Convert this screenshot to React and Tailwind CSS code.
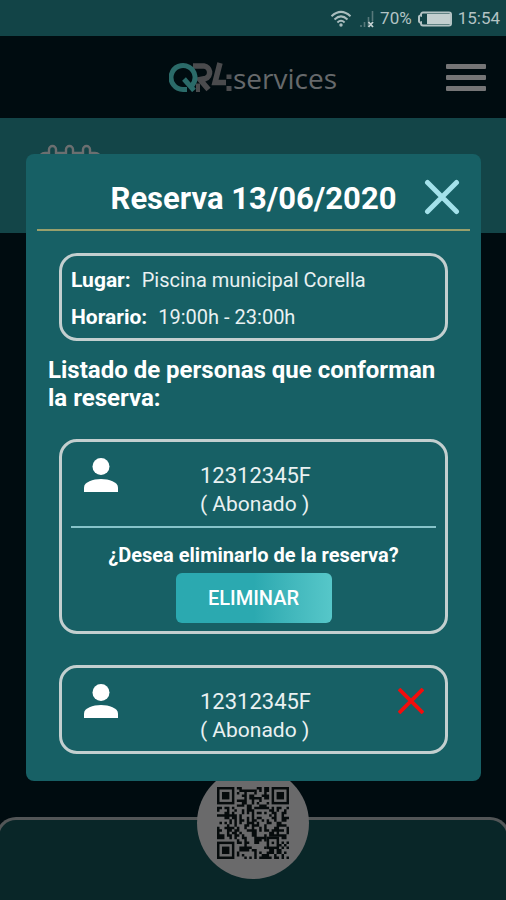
import React from "react";

const QR_SIZE = 29;

function inFinder(x, y) {
  return (x < 8 && y < 8) || (x > 20 && y < 8) || (x < 8 && y > 20);
}

function inAlignment(x, y) {
  return x >= 20 && x <= 24 && y >= 20 && y <= 24;
}

function qrPath() {
  let seed = 20200613;
  let d = "";
  for (let y = 0; y < QR_SIZE; y++) {
    for (let x = 0; x < QR_SIZE; x++) {
      seed = (seed * 1103515245 + 12345) % 2147483648;
      const on = (seed >> 12) % 100 < 53;
      if (on && !inFinder(x, y) && !inAlignment(x, y)) {
        d += `M${x} ${y}h1v1h-1z`;
      }
    }
  }
  return d;
}

const QR_MODULES = qrPath();

function Finder({ x, y }) {
  return (
    <g>
      <rect x={x + 0.5} y={y + 0.5} width="6" height="6" fill="none" stroke="#060b0c" strokeWidth="1" />
      <rect x={x + 2} y={y + 2} width="3" height="3" fill="#060b0c" />
    </g>
  );
}

function QrCode() {
  return (
    <svg viewBox="0 0 29 29" className="size-[72px]" aria-hidden="true">
      <path d={QR_MODULES} fill="#060b0c" />
      <Finder x={0} y={0} />
      <Finder x={22} y={0} />
      <Finder x={0} y={22} />
      <rect x="20.5" y="20.5" width="4" height="4" fill="none" stroke="#060b0c" strokeWidth="1" />
      <rect x="22" y="22" width="1" height="1" fill="#060b0c" />
    </svg>
  );
}

function WifiIcon() {
  return (
    <svg viewBox="0 0 22 18" className="h-[18px] w-[22px]" fill="none" stroke="#a9bdbe" strokeWidth="2" aria-hidden="true">
      <path d="M1.5 6.2Q11-2.5 20.5 6.2" />
      <path d="M4.5 9.4Q11 3.4 17.5 9.4" />
      <path d="M7.4 12.4Q11 9.2 14.6 12.4" />
      <circle cx="11" cy="15" r="1.7" fill="#a9bdbe" stroke="none" />
    </svg>
  );
}

function SignalIcon() {
  return (
    <svg viewBox="0 0 14 18" className="h-[18px] w-[14px]" fill="none" aria-hidden="true">
      <path d="M1 17v-2M4.5 17v-5M8.5 17V7M12.5 11V1" stroke="#57797b" strokeWidth="1.6" />
      <path d="M8.5 12l4.5 5M13 12l-4.5 5" stroke="#c3d0d1" strokeWidth="1.8" />
    </svg>
  );
}

function BatteryIcon() {
  return (
    <svg viewBox="0 0 34 16" className="h-4 w-[34px]" aria-hidden="true">
      <path d="M5 1.500h26a2 2 0 0 1 2 2v9a2 2 0 0 1-2 2H5a2 2 0 0 1-2-2v-1a1.500 1.500 0 0 1-2-1.500V6a1.500 1.500 0 0 1 2-1.500v-1a2 2 0 0 1 2-2z" fill="none" stroke="#b3c3c4" strokeWidth="2" />
      <rect x="9" y="3" width="23" height="10" fill="#c3cfcf" />
    </svg>
  );
}

function LogoMark() {
  return (
    <svg viewBox="0 0 64 30" className="h-[30px] w-16" fill="none" aria-hidden="true">
      <path d="M24 4h11a6.500 6.500 0 0 1 1.500 12.500L31 17.500l8.500 10" stroke="#4a4b4d" strokeWidth="5.500" />
      <path d="M29 21.500V30" stroke="#4a4b4d" strokeWidth="4" />
      <path d="M51 1l-5 19.500h11" stroke="#4a4b4d" strokeWidth="5.500" />
      <path d="M57.500 12.500h5v4.500h-5zM57.500 24h5v5h-5z" fill="#4a4b4d" />
      <path d="M18 27.500h-4A12 12 0 1 1 22.500 24" stroke="#2b6b69" strokeWidth="5" />
      <path d="M15 17l10 11.500" stroke="#2b6b69" strokeWidth="5" />
    </svg>
  );
}

function CalendarIcon() {
  return (
    <svg viewBox="0 0 66 66" className="size-[66px]" fill="none" stroke="#6b6f70" strokeWidth="2.400" aria-hidden="true">
      <path d="M12 9H9a6 6 0 0 0-6 6v42a6 6 0 0 0 6 6h50a6 6 0 0 0 6-6V15a6 6 0 0 0-6-6h-5M20 9h9M37 9h9" />
      <rect x="13" y="2" width="7" height="15" rx="3.500" />
      <rect x="30" y="2" width="7" height="15" rx="3.500" />
      <rect x="47" y="2" width="7" height="15" rx="3.500" />
    </svg>
  );
}

function PersonIcon() {
  return (
    <svg viewBox="0 0 34 34" className="h-[34px] w-[34px]" fill="#fff" aria-hidden="true">
      <circle cx="17" cy="8.500" r="8.500" />
      <path d="M0 34v-4.500C0 24 9 21 17 21s17 3 17 8.500V34z" />
    </svg>
  );
}

function CloseIcon() {
  return (
    <svg viewBox="0 0 36 36" className="size-9" fill="none" stroke="#a3e1ea" strokeWidth="5" strokeLinecap="round" aria-hidden="true">
      <path d="M3.500 3.500l29 29M32.500 3.500l-29 29" />
    </svg>
  );
}

function RemoveIcon() {
  return (
    <svg viewBox="0 0 26 26" className="size-[26px]" fill="none" stroke="#f20d0d" strokeWidth="3.800" aria-hidden="true">
      <path d="M1 1l24 24M25 1L1 25" />
    </svg>
  );
}

function PersonCard({ id, kind, removable, children }) {
  return (
    <li className="rounded-[18px] border-[3px] border-[#c3cfcf] px-[9px]">
      <div className="grid grid-cols-[1fr_auto_1fr] pt-4">
        <div className="pl-[13px]">
          <PersonIcon />
        </div>
        <p className="pt-1 pl-1 text-[#e9f1f2]">
          <span className="block text-[22px] leading-7">{id}</span>
          <span className="block text-[21px] leading-7">( {kind} )</span>
        </p>
        <div className="flex justify-end pt-1 pr-3">
          {removable && (
            <button type="button" aria-label="Eliminar" className="size-[26px]">
              <RemoveIcon />
            </button>
          )}
        </div>
      </div>
      {children}
    </li>
  );
}

export default function App() {
  return (
    <div className="relative flex min-h-screen flex-col overflow-hidden bg-[#000c10] font-['Roboto','Liberation_Sans',sans-serif]">
      <div className="flex h-9 items-center justify-end bg-[#124447] pt-[2px] pr-[6px] text-[17px] text-[#b3c3c4]">
        <WifiIcon />
        <span className="ml-2">
          <SignalIcon />
        </span>
        <span className="ml-[6px]">70%</span>
        <span className="ml-[6px]">
          <BatteryIcon />
        </span>
        <span className="ml-[6px]">15:54</span>
      </div>

      <header className="grid h-[82px] grid-cols-[1fr_auto_1fr] items-center px-5">
        <span />
        <div className="flex items-center text-[#66696b]">
          <LogoMark />
          <span className="pt-[2px] font-['Open_Sans','Noto_Sans',sans-serif] text-[28px] leading-8">services</span>
        </div>
        <button type="button" aria-label="Menú" className="flex w-10 flex-col gap-[6px] justify-self-end">
          <span className="h-[5px] rounded-[1px] bg-[#757576]" />
          <span className="h-[5px] rounded-[1px] bg-[#757576]" />
          <span className="h-[5px] rounded-[1px] bg-[#757576]" />
        </button>
      </header>

      <main className="flex-1">
        <div className="h-[115px] bg-[#134548] pt-[26px] pl-9">
          <CalendarIcon />
        </div>
      </main>

      <nav className="relative -mx-1 h-[83px] rounded-t-[20px] border-[3px] border-b-0 border-[#525657] bg-[#092628]">
        <button
          type="button"
          aria-label="Código QR"
          className="absolute -top-[53px] left-1/2 flex size-28 -translate-x-1/2 items-center justify-center rounded-full bg-[#6a6a6b]"
        >
          <QrCode />
        </button>
      </nav>

      <div className="absolute inset-0 pt-[154px] pr-[25px] pl-[26px]">
        <section role="dialog" aria-labelledby="titulo" className="rounded-lg bg-[#176065] px-[11px] pb-[27px] text-white">
          <div className="grid h-[77px] grid-cols-[1fr_auto_1fr] items-center border-b-2 border-[#98a06c] pt-[11px]">
            <span />
            <h1 id="titulo" className="pt-1 text-[31px] leading-9 font-bold">
              Reserva 13/06/2020
            </h1>
            <button type="button" aria-label="Cerrar" className="mr-[10px] justify-self-end">
              <CloseIcon />
            </button>
          </div>

          <div className="px-[22px]">
            <dl className="mt-[22px] rounded-[18px] border-[3px] border-[#c3cfcf] px-[9px] pt-[6px] pb-[2px] text-[20px] leading-[37px]">
              <div className="flex gap-[11px]">
                <dt className="text-[21px] font-bold">Lugar:</dt>
                <dd className="text-[#e9f1f2]">Piscina municipal Corella</dd>
              </div>
              <div className="flex gap-[11px]">
                <dt className="text-[21px] font-bold">Horario:</dt>
                <dd className="text-[#e9f1f2]">19:00h - 23:00h</dd>
              </div>
            </dl>
            <h2 className="-mx-[11px] mt-[15px] text-[24px] leading-7 font-bold">
              Listado de personas que conforman la reserva:
            </h2>
            <ul className="mt-[27px] flex flex-col gap-[31px]">
              <PersonCard id="12312345F" kind="Abonado">
                <div className="mt-2 flex flex-col items-center border-t-2 border-[#86c3c9] pt-[13px] pb-2">
                  <p className="text-[20px] leading-7 font-bold">¿Desea eliminarlo de la reserva?</p>
                  <button
                    type="button"
                    className="mt-1 h-[50px] w-[156px] rounded-md bg-linear-to-r from-[#2ba9b0] from-50% to-[#56c7c9] text-[20px] font-medium"
                  >
                    ELIMINAR
                  </button>
                </div>
              </PersonCard>
              <PersonCard id="12312345F" kind="Abonado" removable>
                <div className="h-[7px]" />
              </PersonCard>
            </ul>
          </div>
        </section>
      </div>
    </div>
  );
}
